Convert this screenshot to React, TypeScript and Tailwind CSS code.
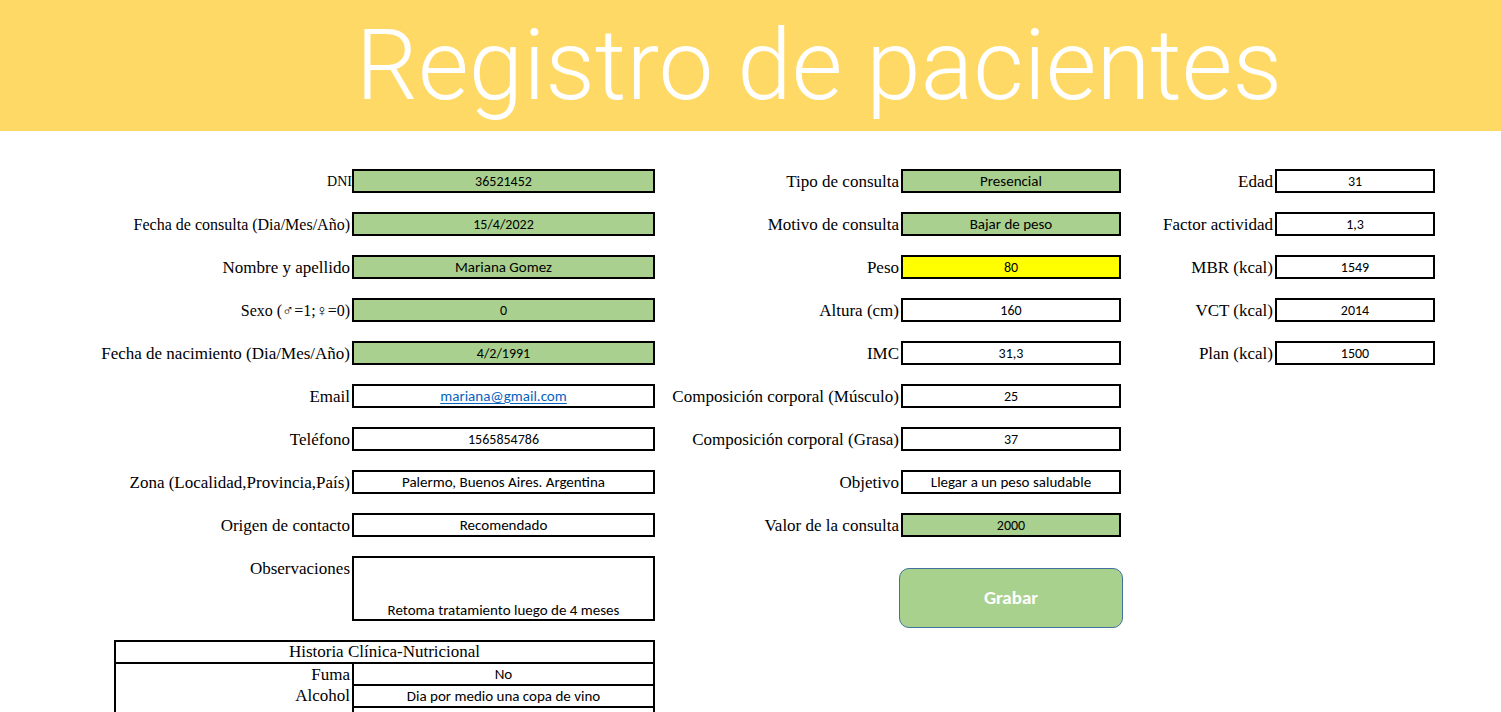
type Tone = "green" | "yellow" | "plain";

interface FieldData {
  id: string;
  label: string;
  value: string;
  tone?: Tone;
  type?: string;
  labelSize?: "small" | "medium";
}

const toneClass: Record<Tone, string> = {
  green: "bg-[#a9d08e]",
  yellow: "bg-[#ffff00]",
  plain: "bg-white",
};

const labelClass = {
  small: "text-[14px]",
  medium: "pr-0.5 text-[16px]",
  normal: "pr-0.5 text-[17px]",
};

const serif = "font-['Constantia','Liberation_Serif',serif]";
const sans = "font-['Calibri','Carlito','Lato',sans-serif]";

const personal: FieldData[] = [
  { id: "dni", label: "DNI", value: "36521452", tone: "green", labelSize: "small" },
  { id: "fecha-consulta", label: "Fecha de consulta (Dia/Mes/Año)", value: "15/4/2022", tone: "green", labelSize: "medium" },
  { id: "nombre", label: "Nombre y apellido", value: "Mariana Gomez", tone: "green" },
  { id: "sexo", label: "Sexo (♂=1;♀=0)", value: "0", tone: "green", labelSize: "medium" },
  { id: "nacimiento", label: "Fecha de nacimiento (Dia/Mes/Año)", value: "4/2/1991", tone: "green" },
  { id: "email", label: "Email", value: "mariana@gmail.com", type: "email" },
  { id: "telefono", label: "Teléfono", value: "1565854786" },
  { id: "zona", label: "Zona (Localidad,Provincia,País)", value: "Palermo, Buenos Aires. Argentina" },
  { id: "origen", label: "Origen de contacto", value: "Recomendado" },
];

const consulta: FieldData[] = [
  { id: "tipo", label: "Tipo de consulta", value: "Presencial", tone: "green" },
  { id: "motivo", label: "Motivo de consulta", value: "Bajar de peso", tone: "green" },
  { id: "peso", label: "Peso", value: "80", tone: "yellow" },
  { id: "altura", label: "Altura (cm)", value: "160" },
  { id: "imc", label: "IMC", value: "31,3" },
  { id: "musculo", label: "Composición corporal (Músculo)", value: "25" },
  { id: "grasa", label: "Composición corporal (Grasa)", value: "37" },
  { id: "objetivo", label: "Objetivo", value: "Llegar a un peso saludable" },
  { id: "valor", label: "Valor de la consulta", value: "2000", tone: "green" },
];

const calculos: FieldData[] = [
  { id: "edad", label: "Edad", value: "31" },
  { id: "factor", label: "Factor actividad", value: "1,3" },
  { id: "mbr", label: "MBR (kcal)", value: "1549" },
  { id: "vct", label: "VCT (kcal)", value: "2014" },
  { id: "plan", label: "Plan (kcal)", value: "1500" },
];

const historia = [
  { label: "Fuma", value: "No" },
  { label: "Alcohol", value: "Dia por medio una copa de vino" },
  { label: "", value: "" },
];

function Field({ field, width }: { field: FieldData; width: string }) {
  const numeric = /^[\d/,]+$/.test(field.value);
  return (
    <div className="flex h-6 items-center">
      <label
        htmlFor={field.id}
        className={`flex-1 whitespace-nowrap pt-0.5 text-right leading-6 ${serif} ${
          labelClass[field.labelSize ?? "normal"]
        }`}
      >
        {field.label}
      </label>
      <input
        id={field.id}
        type={field.type ?? "text"}
        defaultValue={field.value}
        className={`h-6 border-2 border-black text-center ${numeric ? "text-[14px]" : "text-[15px]"} ${sans} ${width} ${
          toneClass[field.tone ?? "plain"]
        } ${field.type === "email" ? "text-[#0563c1] underline underline-offset-2" : "text-black"}`}
      />
    </div>
  );
}

export default function App() {
  return (
    <div className="h-screen overflow-hidden bg-white text-black">
      <header className="flex h-[131px] items-center justify-center bg-[#ffd966] pl-[137px]">
        <h1 className="whitespace-nowrap font-['Bahnschrift','Roboto',sans-serif] text-[98px] font-light leading-none text-white">
          Registro de pacientes
        </h1>
      </header>

      <form className="grid grid-cols-[655fr_466fr_314fr] items-start pr-[66px] pt-[38px]">
        <section className="flex flex-col gap-[19px]">
          {personal.map((f) => (
            <Field key={f.id} field={f} width="w-[303px]" />
          ))}

          <div className="flex items-start">
            <label
              htmlFor="observaciones"
              className={`flex-1 pr-0.5 pt-px text-right text-[17px] leading-6 ${serif}`}
            >
              Observaciones
            </label>
            <textarea
              id="observaciones"
              defaultValue="Retoma tratamiento luego de 4 meses"
              className={`h-[65px] w-[303px] resize-none overflow-hidden border-2 border-black bg-white pt-[44px] text-center text-[15px] leading-[17px] ${sans}`}
            />
          </div>

          <div className="pl-[114px]">
            <table className="w-full table-fixed border-collapse border-2 border-black">
              <colgroup>
                <col />
                <col className="w-[301px]" />
              </colgroup>
              <thead>
                <tr className="h-[22px]">
                  <th
                    colSpan={2}
                    className={`border-2 border-black p-0 text-center text-[17px] font-normal leading-5 ${serif}`}
                  >
                    Historia Clínica-Nutricional
                  </th>
                </tr>
              </thead>
              <tbody>
                {historia.map((row, i) => (
                  <tr key={i} className="h-[22px]">
                    <th
                      scope="row"
                      className={`p-0 pr-0.5 text-right text-[17px] font-normal leading-5 ${serif}`}
                    >
                      {row.label}
                    </th>
                    <td className={`border-2 border-black p-0 text-center text-[15px] leading-5 ${sans}`}>
                      {row.value}
                    </td>
                  </tr>
                ))}
              </tbody>
            </table>
          </div>
        </section>

        <section className="flex flex-col gap-[19px]">
          {consulta.map((f) => (
            <Field key={f.id} field={f} width="w-[220px]" />
          ))}
          <button
            type="button"
            className={`-mr-0.5 mt-3 h-[60px] w-[224px] self-end rounded-[10px] border border-[#41719c] bg-[#a9d18e] text-[19px] font-bold text-white ${sans}`}
          >
            Grabar
          </button>
        </section>

        <section className="flex flex-col gap-[19px]">
          {calculos.map((f) => (
            <Field key={f.id} field={f} width="w-[160px]" />
          ))}
        </section>
      </form>
    </div>
  );
}
